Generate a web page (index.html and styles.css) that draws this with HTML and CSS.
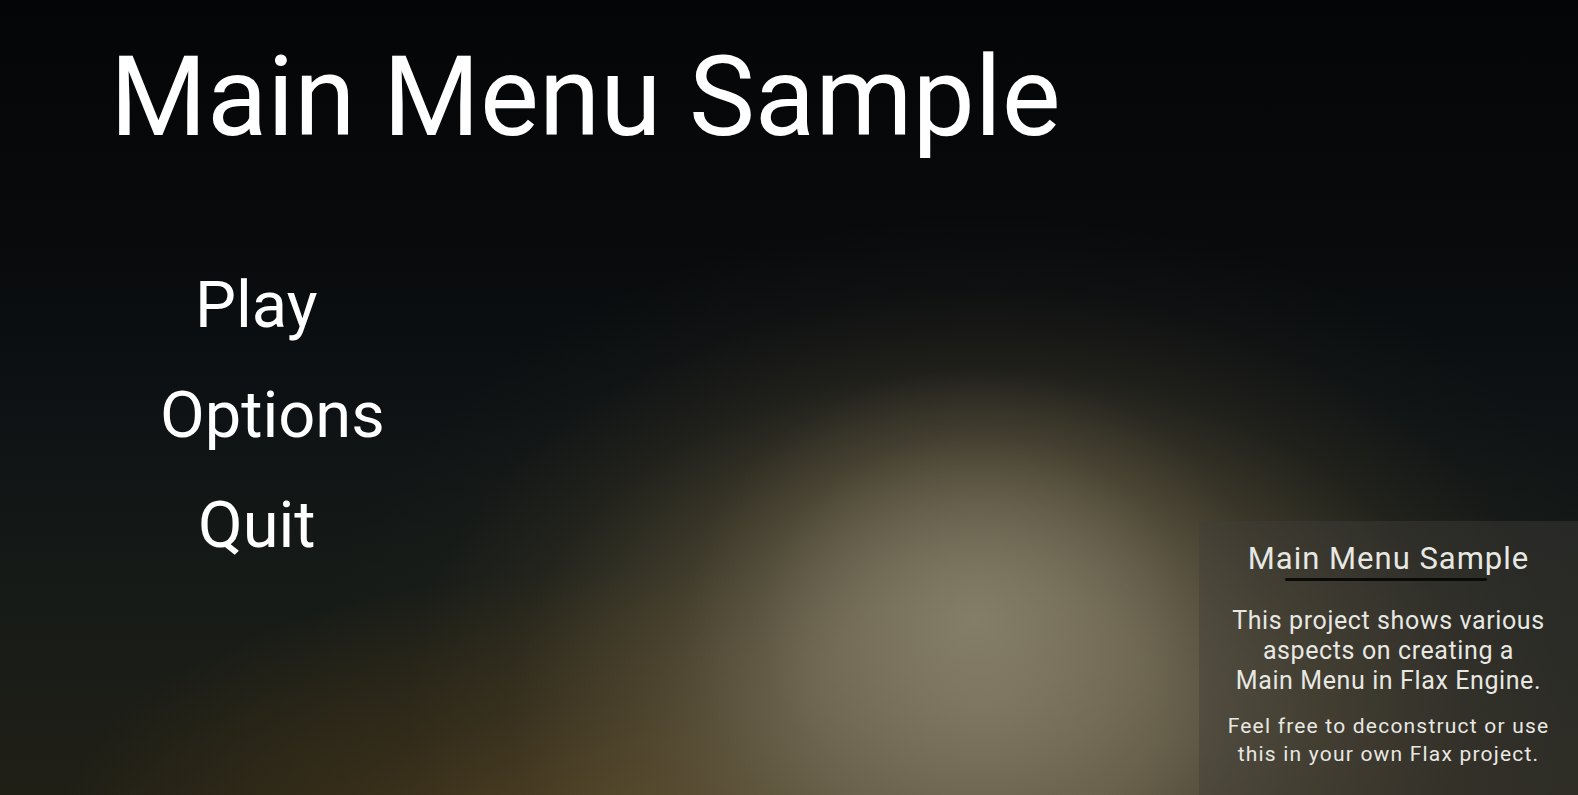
FILE: index.html
```html
<!DOCTYPE html>
<html lang="en">
<head>
<meta charset="utf-8">
<title>Main Menu Sample</title>
<link rel="stylesheet" href="styles.css">
</head>
<body>
<main class="screen">
  <h1 class="title">Main Menu Sample</h1>
  <nav class="menu">
    <a class="menu-item menu-play" href="#">Play</a>
    <a class="menu-item menu-options" href="#">Options</a>
    <a class="menu-item menu-quit" href="#">Quit</a>
  </nav>
  <aside class="info">
    <h2 class="info-title">Main Menu Sample</h2>
    <div class="info-rule"></div>
    <p class="info-text">This project shows various<br>aspects on creating a<br>Main Menu in Flax Engine.</p>
    <p class="info-note">Feel free to deconstruct or use<br>this in your own Flax project.</p>
  </aside>
</main>
</body>
</html>
```

FILE: styles.css
```css
html, body {
  margin: 0;
  padding: 0;
  width: 100%;
  height: 100%;
  overflow: hidden;
}

body {
  font-family: Roboto, "Noto Sans", sans-serif;
  color: #fff;
  background: #050607;
}

.screen {
  position: relative;
  width: 1578px;
  height: 795px;
  box-sizing: border-box;
  padding: 42px 0 0 110px;
  background:
    radial-gradient(ellipse 290px 250px at 975px 620px, rgba(136,129,107,0.85) 0%, rgba(128,120,98,0.5) 45%, rgba(115,106,84,0.18) 75%, rgba(110,100,80,0) 100%),
    radial-gradient(ellipse 680px 490px at 985px 705px, rgba(120,112,90,1) 0%, rgba(112,104,82,0.9) 25%, rgba(90,80,56,0.64) 50%, rgba(60,54,38,0.36) 70%, rgba(40,38,30,0.15) 85%, rgba(30,30,25,0) 100%),
    radial-gradient(ellipse 560px 260px at 620px 830px, rgba(106,82,38,0.8) 0%, rgba(80,62,28,0.45) 50%, rgba(50,40,20,0) 100%),
    linear-gradient(180deg, #040506 0%, #080a0c 30%, #0e1214 52%, #151a17 72%, #201f16 100%);
}

.title {
  margin: 0;
  font-size: 111px;
  font-weight: 400;
  line-height: 1;
}

.menu {
  display: flex;
  flex-direction: column;
  align-items: flex-start;
  margin-top: 97px;
}

.menu-item {
  display: block;
  color: #fff;
  text-decoration: none;
  font-size: 65px;
  line-height: 110px;
}

.menu-play {
  margin-left: 85px;
}

.menu-options {
  margin-left: 50px;
}

.menu-quit {
  margin-left: 88px;
}

.info {
  position: absolute;
  right: 0;
  bottom: 0;
  width: 379px;
  height: 274px;
  box-sizing: border-box;
  padding-top: 20px;
  display: flex;
  flex-direction: column;
  align-items: center;
  text-align: center;
  color: #e8e8e3;
  background: rgba(64, 62, 58, 0.45);
}

.info-title {
  margin: 0;
  font-size: 31px;
  font-weight: 400;
  line-height: 36px;
  letter-spacing: 1px;
}

.info-rule {
  width: 202px;
  height: 3px;
  margin: 1px 0 0 -6px;
  border-radius: 2px;
  background: #0a0a09;
}

.info-text {
  margin: 25px 0 0;
  font-size: 25px;
  line-height: 30px;
  letter-spacing: 0.6px;
}

.info-note {
  margin: 16px 0 0;
  font-size: 21px;
  line-height: 28px;
  letter-spacing: 1.2px;
}
```
